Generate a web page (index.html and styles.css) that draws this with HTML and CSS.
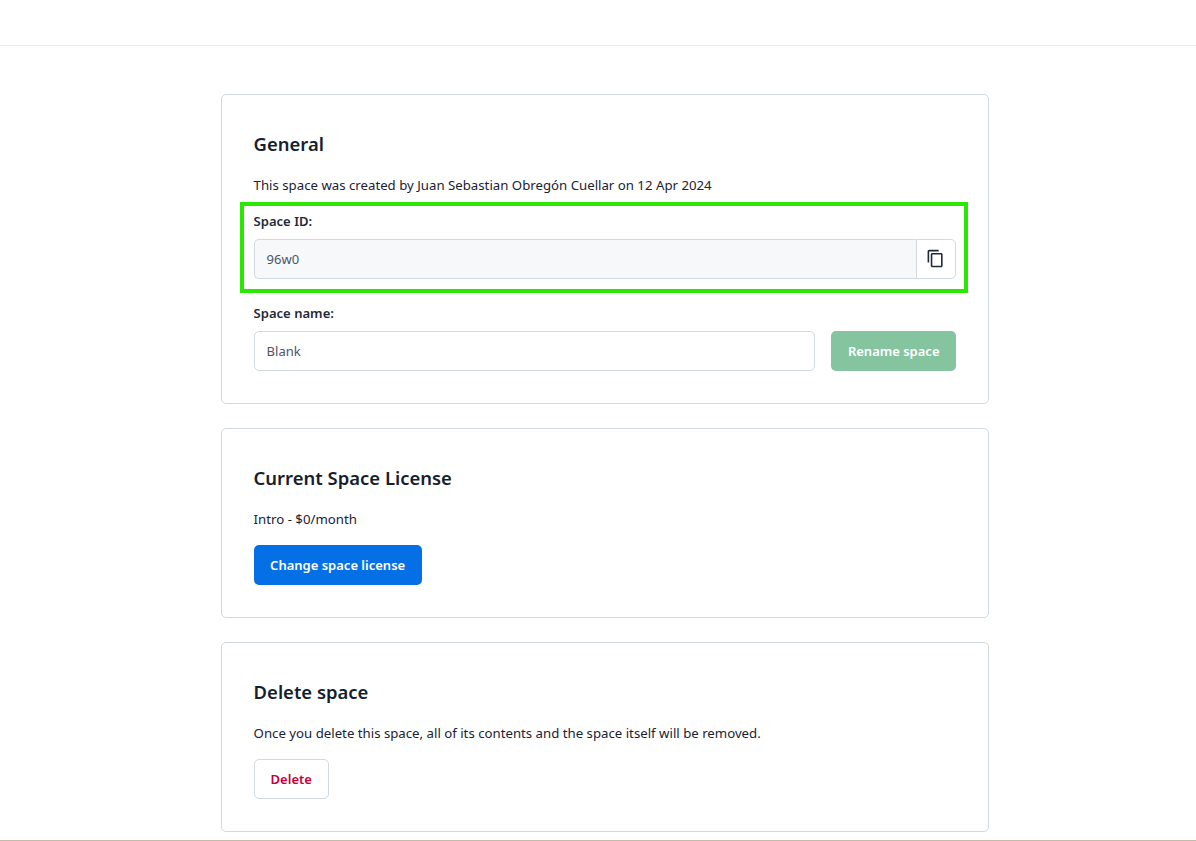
FILE: index.html
```html
<!DOCTYPE html>
<html lang="en">
<head>
<meta charset="utf-8">
<title>Space settings</title>
<link rel="stylesheet" href="styles.css">
</head>
<body>
<header class="topbar"></header>
<main class="content">
  <section class="card">
    <h2 class="card-title">General</h2>
    <p class="card-text">This space was created by Juan Sebastian Obregón Cuellar on 12 Apr 2024</p>
    <div class="field highlighted">
      <label class="field-label">Space ID:</label>
      <div class="input-group">
        <div class="input input-readonly">96w0</div>
        <button class="copy-btn" aria-label="Copy">
          <svg class="copy-icon" viewBox="0 0 24 24"><path d="M16 1H4c-1.1 0-2 .9-2 2v14h2V3h12V1zm3 4H8c-1.1 0-2 .9-2 2v14c0 1.1.9 2 2 2h11c1.1 0 2-.9 2-2V7c0-1.1-.9-2-2-2zm0 16H8V7h11v14z"/></svg>
        </button>
      </div>
    </div>
    <div class="field">
      <label class="field-label">Space name:</label>
      <div class="input-row">
        <div class="input">Blank</div>
        <button class="btn btn-green">Rename space</button>
      </div>
    </div>
  </section>
  <section class="card">
    <h2 class="card-title">Current Space License</h2>
    <p class="card-text">Intro - $0/month</p>
    <div class="actions"><button class="btn btn-blue">Change space license</button></div>
  </section>
  <section class="card">
    <h2 class="card-title">Delete space</h2>
    <p class="card-text">Once you delete this space, all of its contents and the space itself will be removed.</p>
    <div class="actions"><button class="btn btn-danger">Delete</button></div>
  </section>
</main>
<div class="bottom-line"></div>
</body>
</html>
```
FILE: styles.css
```css
* { box-sizing: border-box; }
html, body { height: 100%; }
body {
  margin: 0;
  display: flex;
  flex-direction: column;
  overflow: hidden;
  background: #fff;
  color: #1a2233;
  font-family: "Noto Sans", "Open Sans", sans-serif;
  font-size: 13px;
}
.topbar { height: 46px; flex: none; border-bottom: 1px solid #e8ecf0; }
.content {
  flex: 1;
  min-height: 0;
  padding: 48px 0 0 221px;
  display: flex;
  flex-direction: column;
  gap: 24px;
}
.card {
  width: 768px;
  padding: 32px 32px 32px 31.6px;
  border: 1px solid #cfdae3;
  border-radius: 5px;
  background: #fff;
}
.card-title {
  margin: 0 0 12px;
  font-size: 18.45px;
  font-weight: 600;
  line-height: 34px;
  color: #161e2e;
}
.card-text {
  margin: 0 0 14px;
  font-size: 13.23px;
  line-height: 24px;
  color: #1a2233;
}
.field { margin-bottom: 24px; }
.field:last-child { margin-bottom: 0; }
.highlighted { position: relative; }
.highlighted::after {
  content: "";
  position: absolute;
  top: -9px;
  right: -12px;
  bottom: -14px;
  left: -14px;
  border: 4px solid #2ae800;
  pointer-events: none;
}
.field-label {
  display: block;
  margin-bottom: 8px;
  font-size: 13.05px;
  line-height: 20px;
  font-weight: 600;
  color: #1f2937;
}
.input-group { display: flex; height: 40px; }
.input {
  flex: 1;
  height: 40px;
  padding: 0 12px;
  display: flex;
  align-items: center;
  border: 1px solid #cfdae3;
  border-radius: 5px;
  color: #4a5568;
}
.input-readonly {
  background: #f6f8fa;
  border-radius: 5px 0 0 5px;
  border-right: 0;
}
.copy-btn {
  width: 40px;
  height: 40px;
  padding: 0 2px 1px 0;
  display: flex;
  align-items: center;
  justify-content: center;
  background: #fff;
  border: 1px solid #cfdae3;
  border-radius: 0 5px 5px 0;
}
.copy-icon { width: 19px; height: 19px; fill: #1f2937; }
.input-row { display: flex; gap: 16px; }
.actions { display: flex; }
.btn {
  height: 40px;
  padding: 0 15.5px;
  border: 1px solid transparent;
  border-radius: 5px;
  font-family: inherit;
  font-size: 13px;
  font-weight: 600;
}
.btn-green { background: #84c49f; color: #fff; }
.btn-blue { background: #0570e6; color: #fff; }
.btn-danger { padding: 0 16px; background: #fff; color: #c4003c; border-color: #cfdae3; }
.bottom-line { height: 1px; flex: none; background: #c4bba6; }
```
